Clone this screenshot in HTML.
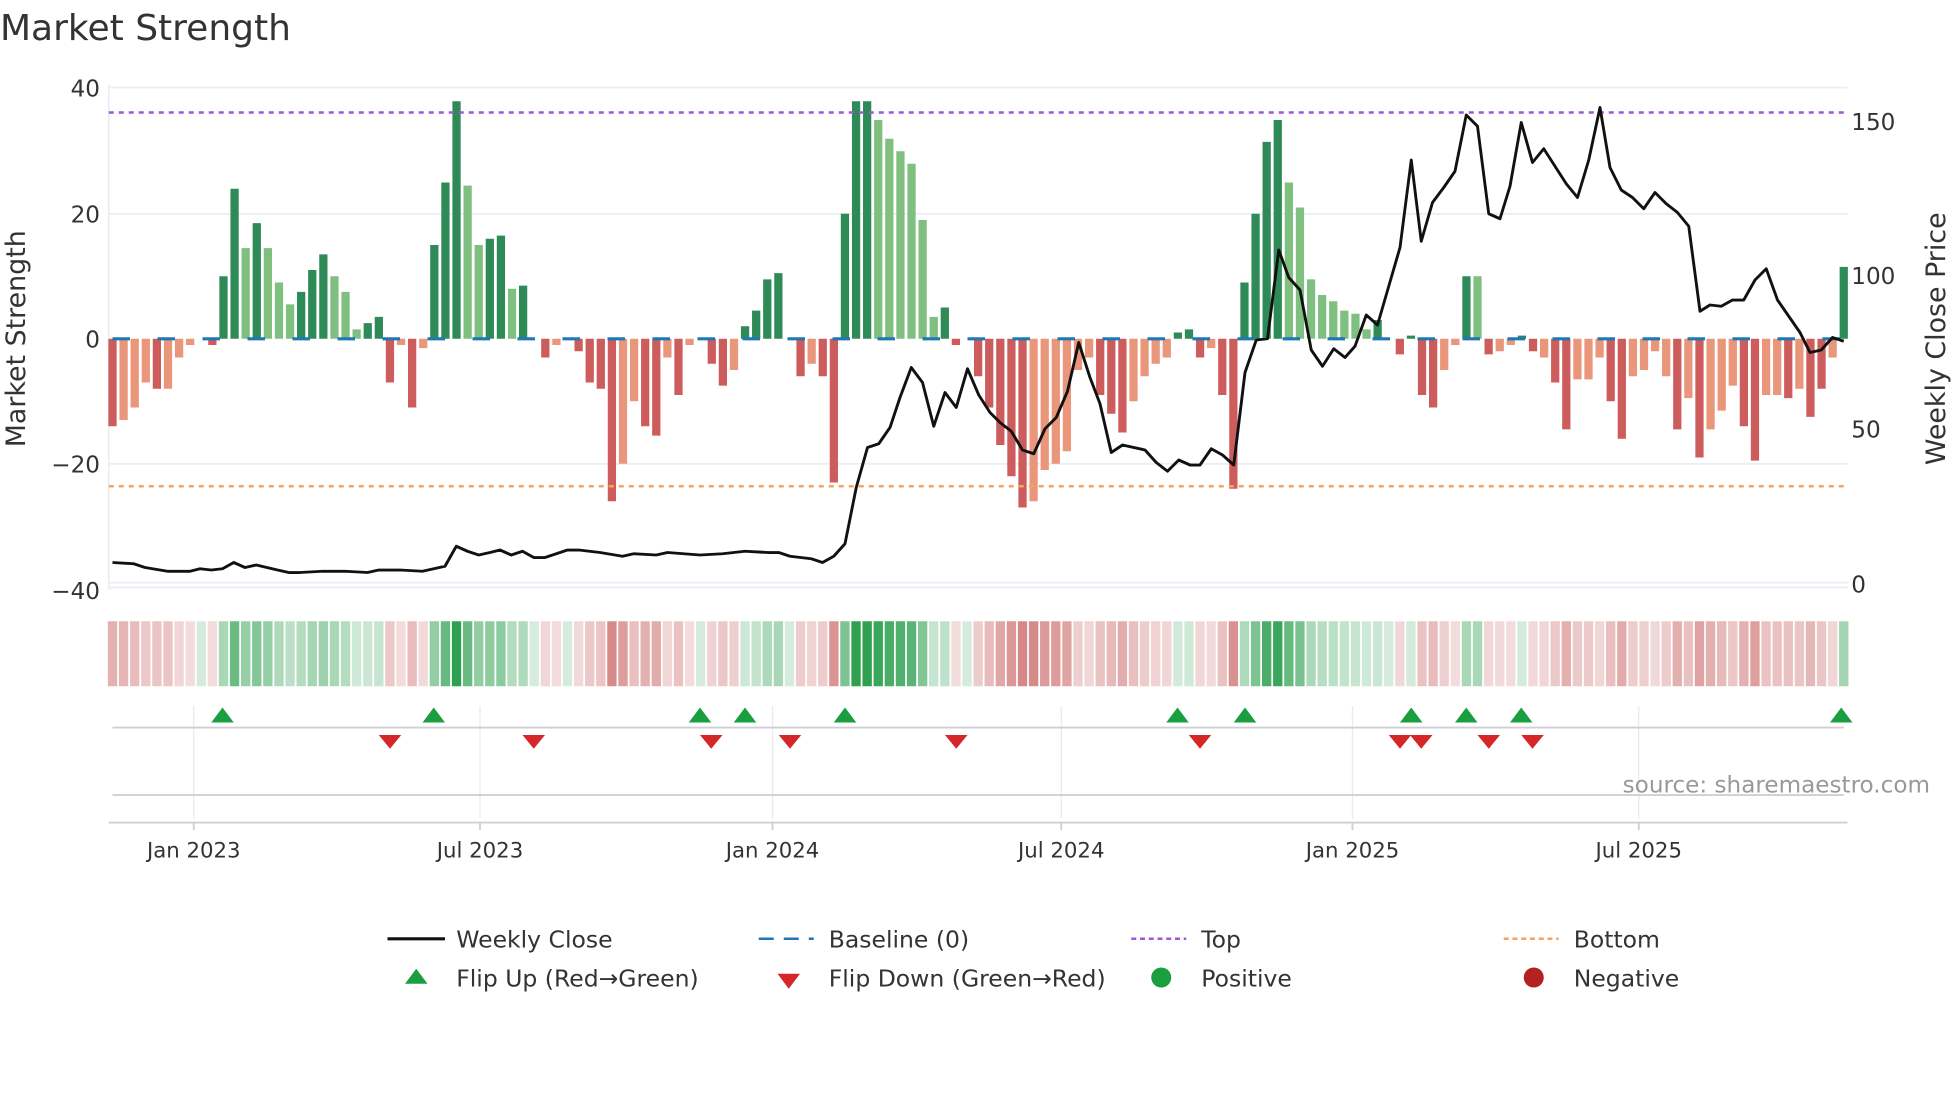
<!DOCTYPE html>
<html><head><meta charset="utf-8"><style>
html,body{margin:0;padding:0;background:#fff;width:1960px;height:1102px;overflow:hidden}
svg{display:block}
text{font-family:"DejaVu Sans","Liberation Sans",sans-serif;fill:#333}
</style></head><body>
<svg id="s" width="1960" height="1102" viewBox="0 0 1568 881.6" xmlns="http://www.w3.org/2000/svg">
<text x="0" y="32" font-size="28.8">Market Strength</text>
<g stroke="#eceef5" stroke-width="1.5">
<line x1="87" y1="70" x2="1478" y2="70"/><line x1="87" y1="171" x2="1478" y2="171"/>
<line x1="87" y1="371" x2="1478" y2="371"/><line x1="87" y1="466" x2="1478" y2="466"/>
<line x1="87" y1="470" x2="1478" y2="470"/>
<line x1="87" y1="68" x2="87" y2="472"/>
</g>
<g font-size="18.5" text-anchor="end">
<text x="80" y="77">40</text><text x="80" y="178">20</text><text x="80" y="278">0</text>
<text x="80" y="378">−20</text><text x="80" y="479">−40</text>
</g>
<g font-size="18.5">
<text x="1481" y="104">150</text><text x="1481" y="227">100</text><text x="1481" y="350">50</text><text x="1481" y="474">0</text>
</g>
<text transform="translate(20,271) rotate(-90)" font-size="21.5" text-anchor="middle">Market Strength</text>
<text transform="translate(1556,271) rotate(-90)" font-size="21.5" text-anchor="middle">Weekly Close Price</text>
<g id="bars"></g>
<line x1="87" y1="90" x2="1478" y2="90" stroke="#9b59d6" stroke-width="2" stroke-dasharray="4,4"/>
<line x1="87" y1="389" x2="1478" y2="389" stroke="#f4a460" stroke-width="2" stroke-dasharray="4,4"/>
<g id="heat"></g>
<g stroke="#e8eaf0" stroke-width="1">
<line x1="155" y1="565" x2="155" y2="655"/><line x1="384" y1="565" x2="384" y2="655"/>
<line x1="618" y1="565" x2="618" y2="655"/><line x1="849" y1="565" x2="849" y2="655"/>
<line x1="1082" y1="565" x2="1082" y2="655"/><line x1="1311" y1="565" x2="1311" y2="655"/>
</g>
<line x1="90" y1="582" x2="1475" y2="582" stroke="#cfcfd4" stroke-width="1.5"/>
<line x1="90" y1="636" x2="1475" y2="636" stroke="#cfcfd4" stroke-width="1.5"/>
<line x1="87" y1="658" x2="1478" y2="658" stroke="#cfcfd4" stroke-width="1.5"/>
<g stroke="#cfcfd4" stroke-width="1.5">
<line x1="155" y1="658" x2="155" y2="664"/><line x1="384" y1="658" x2="384" y2="664"/>
<line x1="618" y1="658" x2="618" y2="664"/><line x1="849" y1="658" x2="849" y2="664"/>
<line x1="1082" y1="658" x2="1082" y2="664"/><line x1="1311" y1="658" x2="1311" y2="664"/>
</g>
<g id="marks"></g>
<text x="1544" y="634" font-size="18.5" text-anchor="end" style="fill:#999">source: sharemaestro.com</text>
<g font-size="17" text-anchor="middle">
<text x="155" y="686">Jan 2023</text><text x="384" y="686">Jul 2023</text><text x="618" y="686">Jan 2024</text>
<text x="849" y="686">Jul 2024</text><text x="1082" y="686">Jan 2025</text><text x="1311" y="686">Jul 2025</text>
</g>
<g font-size="18.8">
<line x1="310" y1="751" x2="356" y2="751" stroke="#111" stroke-width="2.5"/><text x="365" y="758">Weekly Close</text>
<line x1="607" y1="751" x2="651" y2="751" stroke="#1f77b4" stroke-width="2" stroke-dasharray="12,8"/><text x="663" y="758">Baseline (0)</text>
<line x1="905" y1="751" x2="949" y2="751" stroke="#9b59d6" stroke-width="2" stroke-dasharray="4,3"/><text x="961" y="758">Top</text>
<line x1="1203" y1="751" x2="1247" y2="751" stroke="#f4a460" stroke-width="2" stroke-dasharray="4,3"/><text x="1259" y="758">Bottom</text>
<polygon points="324,787 342,787 333,775" fill="#1a9e3f"/><text x="365" y="789">Flip Up (Red→Green)</text>
<polygon points="622,779 640,779 631,791" fill="#d62728"/><text x="663" y="789">Flip Down (Green→Red)</text>
<circle cx="929" cy="782" r="8" fill="#1a9e3f"/><text x="961" y="789">Positive</text>
<circle cx="1227" cy="782" r="8" fill="#b22222"/><text x="1259" y="789">Negative</text>
</g>
<g id="price"></g>
</svg>
<script>
var D=[[-14,1],[-13,0],[-11,0],[-7,0],[-8,1],[-8,0],[-3,0],[-1,0],[0,0],[-1,1],[10,1],[24,1],[14.5,0],[18.5,1],[14.5,0],[9,0],[5.5,0],[7.5,1],[11,1],[13.5,1],[10,0],[7.5,0],[1.5,0],[2.5,1],[3.5,1],[-7,1],[-1,0],[-11,1],[-1.5,0],[15,1],[25,1],[38,1],[24.5,0],[15,0],[16,1],[16.5,1],[8,0],[8.5,1],[0,0],[-3,1],[-1,0],[0,0],[-2,1],[-7,1],[-8,1],[-26,1],[-20,0],[-10,0],[-14,1],[-15.5,1],[-3,0],[-9,1],[-1,0],[0,0],[-4,1],[-7.5,1],[-5,0],[2,1],[4.5,1],[9.5,1],[10.5,1],[0,0],[-6,1],[-4,0],[-6,1],[-23,1],[20,1],[38,1],[38,1],[35,0],[32,0],[30,0],[28,0],[19,0],[3.5,0],[5,1],[-1,1],[0,0],[-6,1],[-11,1],[-17,1],[-22,1],[-27,1],[-26,0],[-21,0],[-20,0],[-18,0],[-5,0],[-3,0],[-9,1],[-12,1],[-15,1],[-10,0],[-6,0],[-4,0],[-3,0],[1,1],[1.5,1],[-3,1],[-1.5,0],[-9,1],[-24,1],[9,1],[20,1],[31.5,1],[35,1],[25,0],[21,0],[9.5,0],[7,0],[6,0],[4.5,0],[4,0],[1.5,0],[3,1],[0,0],[-2.5,1],[0.5,1],[-9,1],[-11,1],[-5,0],[-1,0],[10,1],[10,0],[-2.5,1],[-2,0],[-1,0],[0.5,1],[-2,1],[-3,0],[-7,1],[-14.5,1],[-6.5,0],[-6.5,0],[-3,0],[-10,1],[-16,1],[-6,0],[-5,0],[-2,0],[-6,0],[-14.5,1],[-9.5,0],[-19,1],[-14.5,0],[-11.5,0],[-7.5,0],[-14,1],[-19.5,1],[-9,0],[-9,0],[-9.5,1],[-8,0],[-12.5,1],[-8,1],[-3,0],[11.5,1]];
var n=D.length,sp=(1475-90)/(n-1),b='',h='';
for(var i=0;i<n;i++){var x=90+sp*i,v=D[i][0],t=D[i][1];
 var c=v>=0?(t?'#2e8b57':'#7fbf7f'):(t?'#cd5c5c':'#e9967a');
 var y=v>=0?271-v*5:271,hh=Math.abs(v)*5;
 if(hh>0)b+='<rect x="'+(x-3.3)+'" y="'+y+'" width="6.6" height="'+hh+'" fill="'+c+'"/>';
 var op=v>=0?0.2+0.8*Math.min(1,v/38):0.2+0.55*Math.min(1,-v/27);
 var hc=v>=0?'rgb(46,160,80)':'rgb(200,95,95)';
 h+='<rect x="'+(x-sp/2+0.7)+'" y="497" width="'+(sp-1.4)+'" height="52" fill="'+hc+'" fill-opacity="'+op.toFixed(2)+'"/>';
}
b+='<line x1="90" y1="271" x2="1478" y2="271" stroke="#1f77b4" stroke-width="2.5" stroke-dasharray="14,22"/>';
document.getElementById('bars').innerHTML=b;document.getElementById('heat').innerHTML=h;
var m='',U=[178,347,560,596,676,942,996,1129,1173,1217,1473],Dn=[312,427,569,632,765,960,1120,1137,1191,1226];
U.forEach(function(x){m+='<polygon points="'+(x-9)+',578 '+(x+9)+',578 '+x+',566" fill="#1a9e3f"/>'});
Dn.forEach(function(x){m+='<polygon points="'+(x-9)+',588 '+(x+9)+',588 '+x+',599" fill="#d62728"/>'});
document.getElementById('marks').innerHTML=m;
var P=[[90,450],[107,451],[116,454],[134,457],[152,457],[160,455],[169,456],[178,455],[187,450],[196,454],[205,452],[222,456],[231,458],[240,458],[258,457],[276,457],[294,458],[303,456],[320,456],[338,457],[347,455],[356,453],[365,437],[374,441],[383,444],[392,442],[400,440],[409,444],[418,441],[427,446],[436,446],[445,443],[454,440],[463,440],[480,442],[498,445],[507,443],[525,444],[534,442],[560,444],[578,443],[596,441],[614,442],[623,442],[632,445],[649,447],[658,450],[667,445],[676,435],[685,390],[694,358],[703,355],[712,342],[720,318],[729,294],[738,306],[747,341],[756,314],[765,326],[774,295],[783,316],[792,330],[800,338],[809,345],[818,360],[827,363],[836,343],[845,334],[854,313],[863,274],[872,302],[880,323],[889,362],[898,356],[916,360],[925,370],[934,377],[943,368],[952,372],[960,372],[969,359],[978,364],[987,372],[996,298],[1005,272],[1014,271],[1023,200],[1031,222],[1040,232],[1049,280],[1058,293],[1067,279],[1076,286],[1084,277],[1093,252],[1102,260],[1120,198],[1129,128],[1137,193],[1146,162],[1155,150],[1164,137],[1173,92],[1182,101],[1191,171],[1200,175],[1208,149],[1217,98],[1226,130],[1235,119],[1244,133],[1253,147],[1262,158],[1271,128],[1280,86],[1288,134],[1297,152],[1306,158],[1315,167],[1324,154],[1333,163],[1342,170],[1351,181],[1360,249],[1368,244],[1377,245],[1386,240],[1395,240],[1404,224],[1413,215],[1422,240],[1431,253],[1440,266],[1448,282],[1457,280],[1466,270],[1475,273]];
document.getElementById('price').innerHTML='<polyline fill="none" stroke="#111" stroke-width="2.3" stroke-linejoin="round" points="'+P.map(function(p){return p.join(',')}).join(' ')+'"/>';
</script>
</body></html>
